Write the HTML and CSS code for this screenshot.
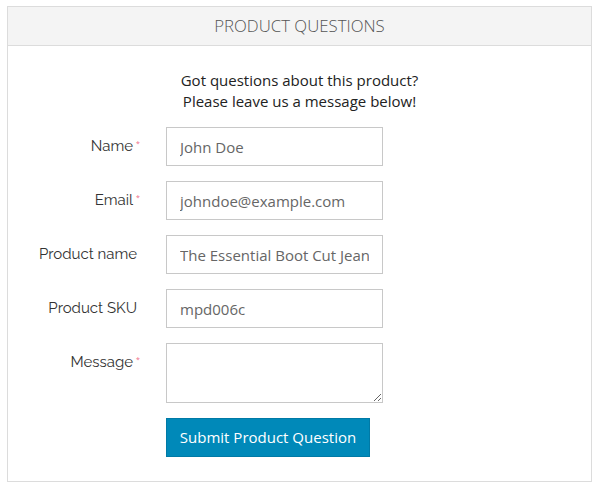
FILE: index.html
```html
<!DOCTYPE html>
<html>
<head>
<meta charset="utf-8">
<link rel="stylesheet" href="styles.css">
</head>
<body>
<div class="box">
  <div class="box-head">PRODUCT QUESTIONS</div>
  <div class="box-body">
    <p class="intro">Got questions about this product?<br>Please leave us a message below!</p>
    <form class="form">
      <div class="row">
        <label class="lbl"><span class="req">Name</span></label>
        <input class="field" type="text" value="John Doe">
      </div>
      <div class="row">
        <label class="lbl"><span class="req">Email</span></label>
        <input class="field" type="text" value="johndoe@example.com">
      </div>
      <div class="row">
        <label class="lbl"><span>Product name</span></label>
        <input class="field" type="text" value="The Essential Boot Cut Jean">
      </div>
      <div class="row">
        <label class="lbl"><span>Product SKU</span></label>
        <input class="field" type="text" value="mpd006c">
      </div>
      <div class="row">
        <label class="lbl"><span class="req">Message</span></label>
        <textarea class="field area"></textarea>
      </div>
      <div class="row">
        <span class="lbl"></span>
        <button class="btn" type="button">Submit Product Question</button>
      </div>
    </form>
  </div>
</div>
</body>
</html>
```
FILE: styles.css
```css
html, body { margin: 0; padding: 0; background: #fff; }
body { padding: 6px 8px 0 7px; font-family: "Open Sans", sans-serif; }
.box {
  border: 1px solid #dcdcdc;
  width: 585px;
  box-sizing: border-box;
}
.box-head {
  background: #f4f4f4;
  border-bottom: 1px solid #dcdcdc;
  height: 38px;
  line-height: 38px;
  text-align: center;
  font-weight: 300;
  font-size: 16.8px;
  color: #555;
}
.box-body { padding: 24px 0 24px; }
.intro {
  margin: 0 0 15px;
  text-align: center;
  font-size: 15px;
  line-height: 21px;
  color: #222;
}
.form { display: flex; flex-direction: column; gap: 15px; }
.row { display: flex; align-items: flex-start; }
.lbl {
  width: 158px;
  flex: none;
  box-sizing: border-box;
  padding-right: 29px;
  text-align: right;
  font-family: "Raleway", "Lato", sans-serif;
  font-size: 15px;
  line-height: 38px;
  color: #333;
}
.req { position: relative; margin-right: 4px; }
.req::after {
  content: "*";
  position: absolute;
  left: 100%;
  top: 3px;
  margin-left: 3px;
  color: #f06a86;
  font-size: 7px;
  line-height: 1;
  font-family: "Open Sans", sans-serif;
}
.field {
  width: 217px;
  height: 39px;
  box-sizing: border-box;
  border: 1px solid #c8c8c8;
  border-radius: 0;
  padding: 0 13px;
  margin: 0;
  font-family: "Open Sans", sans-serif;
  font-size: 15px;
  color: #666;
  background: #fff;
  outline: none;
}
.area { height: 60px; resize: both; padding: 6px 13px; }
.btn {
  width: 204px;
  height: 39px;
  border: 1px solid #007aa6;
  background: #0089b9;
  color: #fff;
  font-family: "Open Sans", sans-serif;
  font-size: 15px;
  line-height: 36px;
  padding: 0 0 2px;
  margin: 0;
  border-radius: 0;
}
```
